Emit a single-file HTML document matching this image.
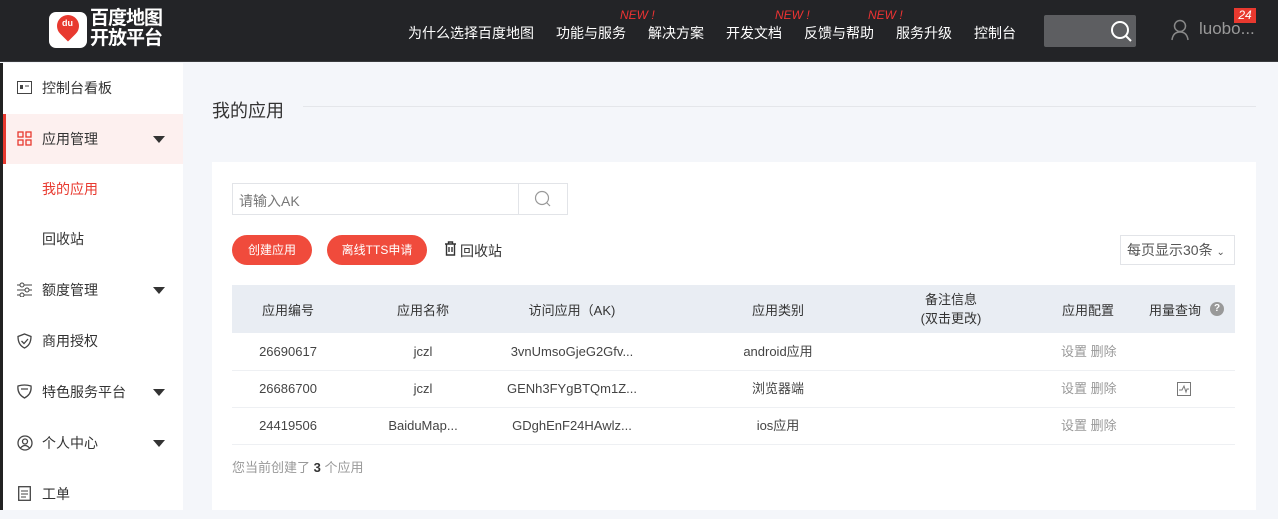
<!DOCTYPE html>
<html><head><meta charset="utf-8"><style>
*{margin:0;padding:0;box-sizing:border-box}
body{width:1278px;height:510px;overflow:hidden;background:#f4f6fa;font-family:"Liberation Sans","Noto Sans CJK SC",sans-serif;position:relative;color:#333}
.a{position:absolute}
.hdr{left:0;top:0;width:1278px;height:62px;background:#232427;border-bottom:1px solid #3a3b3e}
.nav{top:23px;color:#fff;font-size:14px}
.new{top:8px;color:#e33;font-size:12px;font-style:italic}
.side{left:0;top:63px;width:183px;height:447px;background:#fff;border-left:3px solid #222}
.mi{left:3px;width:180px;height:50px;font-size:14px;color:#333;line-height:50px;padding-left:39px}
.tri{left:150px;top:22px;width:0;height:0;border-left:6px solid transparent;border-right:6px solid transparent;border-top:7px solid #333}
.th{top:300px;font-size:13px;color:#333;text-align:center}
.td{font-size:13px;color:#444;text-align:center;height:18px;line-height:18px}
.g{color:#999;font-size:13px;height:18px;line-height:18px}
.ln{left:232px;width:1003px;height:1px;background:#eef0f3}
</style></head><body>
<div class="a hdr"></div>
<div class="a" style="left:49px;top:12px;width:38px;height:36px;background:#fff;border-radius:7px"></div>
<div class="a" style="left:57px;top:15px;width:22px;height:22px;background:#e8392f;border-radius:50% 50% 50% 0;transform:rotate(-45deg)"></div>
<div class="a" style="left:62px;top:18px;color:#fff;font-size:9px;font-weight:bold">du</div>
<div class="a" style="left:90px;top:9px;color:#fff;font-size:19px;line-height:20px;font-weight:bold;letter-spacing:-1px">百度地图<br>开放平台</div>
<div class="a nav" style="left:408px">为什么选择百度地图</div>
<div class="a nav" style="left:556px">功能与服务</div>
<div class="a nav" style="left:648px">解决方案</div>
<div class="a nav" style="left:726px">开发文档</div>
<div class="a nav" style="left:804px">反馈与帮助</div>
<div class="a nav" style="left:896px">服务升级</div>
<div class="a nav" style="left:974px">控制台</div>
<div class="a new" style="left:620px">NEW !</div>
<div class="a new" style="left:775px">NEW !</div>
<div class="a new" style="left:868px">NEW !</div>
<div class="a" style="left:1044px;top:15px;width:92px;height:32px;background:#5d5e61;border-radius:2px"></div>
<svg class="a" style="left:1110px;top:20px" width="24" height="24"><circle cx="10" cy="10" r="8" fill="none" stroke="#fff" stroke-width="2"/><line x1="16" y1="16" x2="21" y2="21" stroke="#fff" stroke-width="2"/></svg>
<svg class="a" style="left:1170px;top:19px" width="20" height="22"><circle cx="10" cy="7" r="5.5" fill="none" stroke="#888" stroke-width="1.5"/><path d="M2 21 Q3 13 10 13 Q17 13 18 21" fill="none" stroke="#888" stroke-width="1.5"/></svg>
<div class="a" style="left:1199px;top:19px;color:#999;font-size:17px">luobo...</div>
<div class="a" style="left:1234px;top:8px;width:22px;height:15px;background:#e8392f;color:#fff;font-size:12px;font-style:italic;text-align:center;line-height:15px">24</div>

<div class="a side"></div>
<div class="a mi" style="top:63px">控制台看板</div>
<svg class="a" style="left:17px;top:81px" width="15" height="13"><rect x="0.5" y="0.5" width="14" height="12" fill="none" stroke="#444"/><rect x="3" y="4" width="3" height="4" fill="#444"/><line x1="8" y1="5" x2="12" y2="5" stroke="#444"/></svg>
<div class="a" style="left:3px;top:114px;width:180px;height:50px;background:#fdf0ef;border-left:3px solid #e8392f"></div>
<div class="a mi" style="top:114px">应用管理<div class="a tri"></div></div>
<svg class="a" style="left:17px;top:131px" width="15" height="15"><g fill="none" stroke="#e8392f" stroke-width="1.3"><rect x="1" y="1" width="5" height="5"/><rect x="9" y="1" width="5" height="5"/><rect x="1" y="9" width="5" height="5"/><rect x="9" y="9" width="5" height="5"/></g></svg>
<div class="a mi" style="top:164px;color:#e8392f">我的应用</div>
<div class="a mi" style="top:214px">回收站</div>
<div class="a mi" style="top:265px">额度管理<div class="a tri"></div></div>
<svg class="a" style="left:17px;top:282px" width="15" height="15"><g stroke="#444" fill="#fff"><line x1="0" y1="3" x2="15" y2="3"/><line x1="0" y1="8" x2="15" y2="8"/><line x1="0" y1="13" x2="15" y2="13"/><circle cx="5" cy="3" r="2"/><circle cx="10" cy="8" r="2"/><circle cx="5" cy="13" r="2"/></g></svg>
<div class="a mi" style="top:316px">商用授权</div>
<svg class="a" style="left:17px;top:333px" width="15" height="16"><path d="M7.5 1 L14 3.5 Q14 12 7.5 15 Q1 12 1 3.5Z M4.5 8 L7 10.5 L11 6" fill="none" stroke="#444" stroke-width="1.3"/></svg>
<div class="a mi" style="top:367px">特色服务平台<div class="a tri"></div></div>
<svg class="a" style="left:17px;top:384px" width="15" height="15"><path d="M1 2 Q7.5 0 14 2 Q15 10 7.5 14 Q0 10 1 2Z M4 5 H11" fill="none" stroke="#444" stroke-width="1.3"/></svg>
<div class="a mi" style="top:418px">个人中心<div class="a tri"></div></div>
<svg class="a" style="left:17px;top:435px" width="16" height="16"><circle cx="8" cy="8" r="7" fill="none" stroke="#444" stroke-width="1.3"/><circle cx="8" cy="6.5" r="2.5" fill="none" stroke="#444" stroke-width="1.3"/><path d="M3.5 13 Q8 8 12.5 13" fill="none" stroke="#444" stroke-width="1.3"/></svg>
<div class="a mi" style="top:469px">工单</div>
<svg class="a" style="left:18px;top:485px" width="13" height="16"><rect x="0.7" y="1.7" width="11.6" height="13.6" fill="none" stroke="#444" stroke-width="1.3"/><line x1="3" y1="6" x2="10" y2="6" stroke="#444"/><line x1="3" y1="9" x2="10" y2="9" stroke="#444"/><line x1="3" y1="12" x2="8" y2="12" stroke="#444"/></svg>

<div class="a" style="left:212px;top:97px;font-size:18px;color:#333">我的应用</div>
<div class="a" style="left:303px;top:106px;width:953px;height:1px;background:#e4e6ea"></div>
<div class="a" style="left:212px;top:162px;width:1044px;height:348px;background:#fff"></div>

<div class="a" style="left:232px;top:183px;width:336px;height:32px;border:1px solid #e2e4e8"></div>
<div class="a" style="left:518px;top:184px;width:1px;height:30px;background:#e2e4e8"></div>
<div class="a" style="left:239px;top:191px;font-size:14px;color:#777">请输入AK</div>
<svg class="a" style="left:534px;top:190px" width="18" height="18"><circle cx="8" cy="8" r="6.5" fill="none" stroke="#999" stroke-width="1.2"/><line x1="12.5" y1="12.5" x2="16" y2="16" stroke="#999" stroke-width="1.2"/></svg>

<div class="a" style="left:232px;top:235px;width:80px;height:30px;background:#f04b3c;border-radius:15px;color:#fff;font-size:12px;text-align:center;line-height:30px">创建应用</div>
<div class="a" style="left:327px;top:235px;width:100px;height:30px;background:#f04b3c;border-radius:15px;color:#fff;font-size:12px;text-align:center;line-height:30px">离线TTS申请</div>
<svg class="a" style="left:444px;top:241px" width="13" height="15"><path d="M1 3 H12 M4.5 3 V1 H8.5 V3 M2.5 3 V14 H10.5 V3 M5 6 V11 M8 6 V11" fill="none" stroke="#333" stroke-width="1.4"/></svg>
<div class="a" style="left:460px;top:241px;font-size:14px;color:#333">回收站</div>

<div class="a" style="left:1120px;top:235px;width:115px;height:30px;border:1px solid #e2e4e8;font-size:14px;color:#555;line-height:28px;padding-left:6px">每页显示30条 <span style="font-size:10px">⌄</span></div>

<div class="a" style="left:232px;top:285px;width:1003px;height:48px;background:#e9edf3"></div>
<div class="a th" style="left:238px;width:100px">应用编号</div>
<div class="a th" style="left:373px;width:100px">应用名称</div>
<div class="a th" style="left:502px;width:140px">访问应用（AK)</div>
<div class="a th" style="left:728px;width:100px">应用类别</div>
<div class="a th" style="left:901px;width:100px;top:290px;line-height:19px">备注信息<br>(双击更改)</div>
<div class="a th" style="left:1038px;width:100px">应用配置</div>
<div class="a th" style="left:1145px;width:60px">用量查询</div>
<div class="a" style="left:1210px;top:302px;width:14px;height:14px;border-radius:50%;background:#999;color:#fff;font-size:10px;text-align:center;line-height:14px;font-weight:bold">?</div>

<div class="a ln" style="top:370px"></div>
<div class="a ln" style="top:407px"></div>
<div class="a ln" style="top:444px"></div>

<div class="a td" style="left:238px;width:100px;top:343px">26690617</div>
<div class="a td" style="left:373px;width:100px;top:343px">jczl</div>
<div class="a td" style="left:502px;width:140px;top:343px">3vnUmsoGjeG2Gfv...</div>
<div class="a td" style="left:718px;width:120px;top:343px">android应用</div>
<div class="a g" style="left:1061px;top:343px">设置 删除</div>

<div class="a td" style="left:238px;width:100px;top:380px">26686700</div>
<div class="a td" style="left:373px;width:100px;top:380px">jczl</div>
<div class="a td" style="left:502px;width:140px;top:380px">GENh3FYgBTQm1Z...</div>
<div class="a td" style="left:718px;width:120px;top:380px">浏览器端</div>
<div class="a g" style="left:1061px;top:380px">设置 删除</div>
<svg class="a" style="left:1177px;top:382px" width="14" height="14"><rect x="0.5" y="0.5" width="13" height="13" fill="none" stroke="#777"/><path d="M2 8 H5 L7 4 L9 10 L10 7 H12" fill="none" stroke="#777"/></svg>

<div class="a td" style="left:238px;width:100px;top:417px">24419506</div>
<div class="a td" style="left:363px;width:120px;top:417px">BaiduMap...</div>
<div class="a td" style="left:502px;width:140px;top:417px">GDghEnF24HAwlz...</div>
<div class="a td" style="left:718px;width:120px;top:417px">ios应用</div>
<div class="a g" style="left:1061px;top:417px">设置 删除</div>

<div class="a" style="left:232px;top:457px;font-size:13px;color:#999">您当前创建了 <b style="color:#333">3</b> 个应用</div>
</body></html>
